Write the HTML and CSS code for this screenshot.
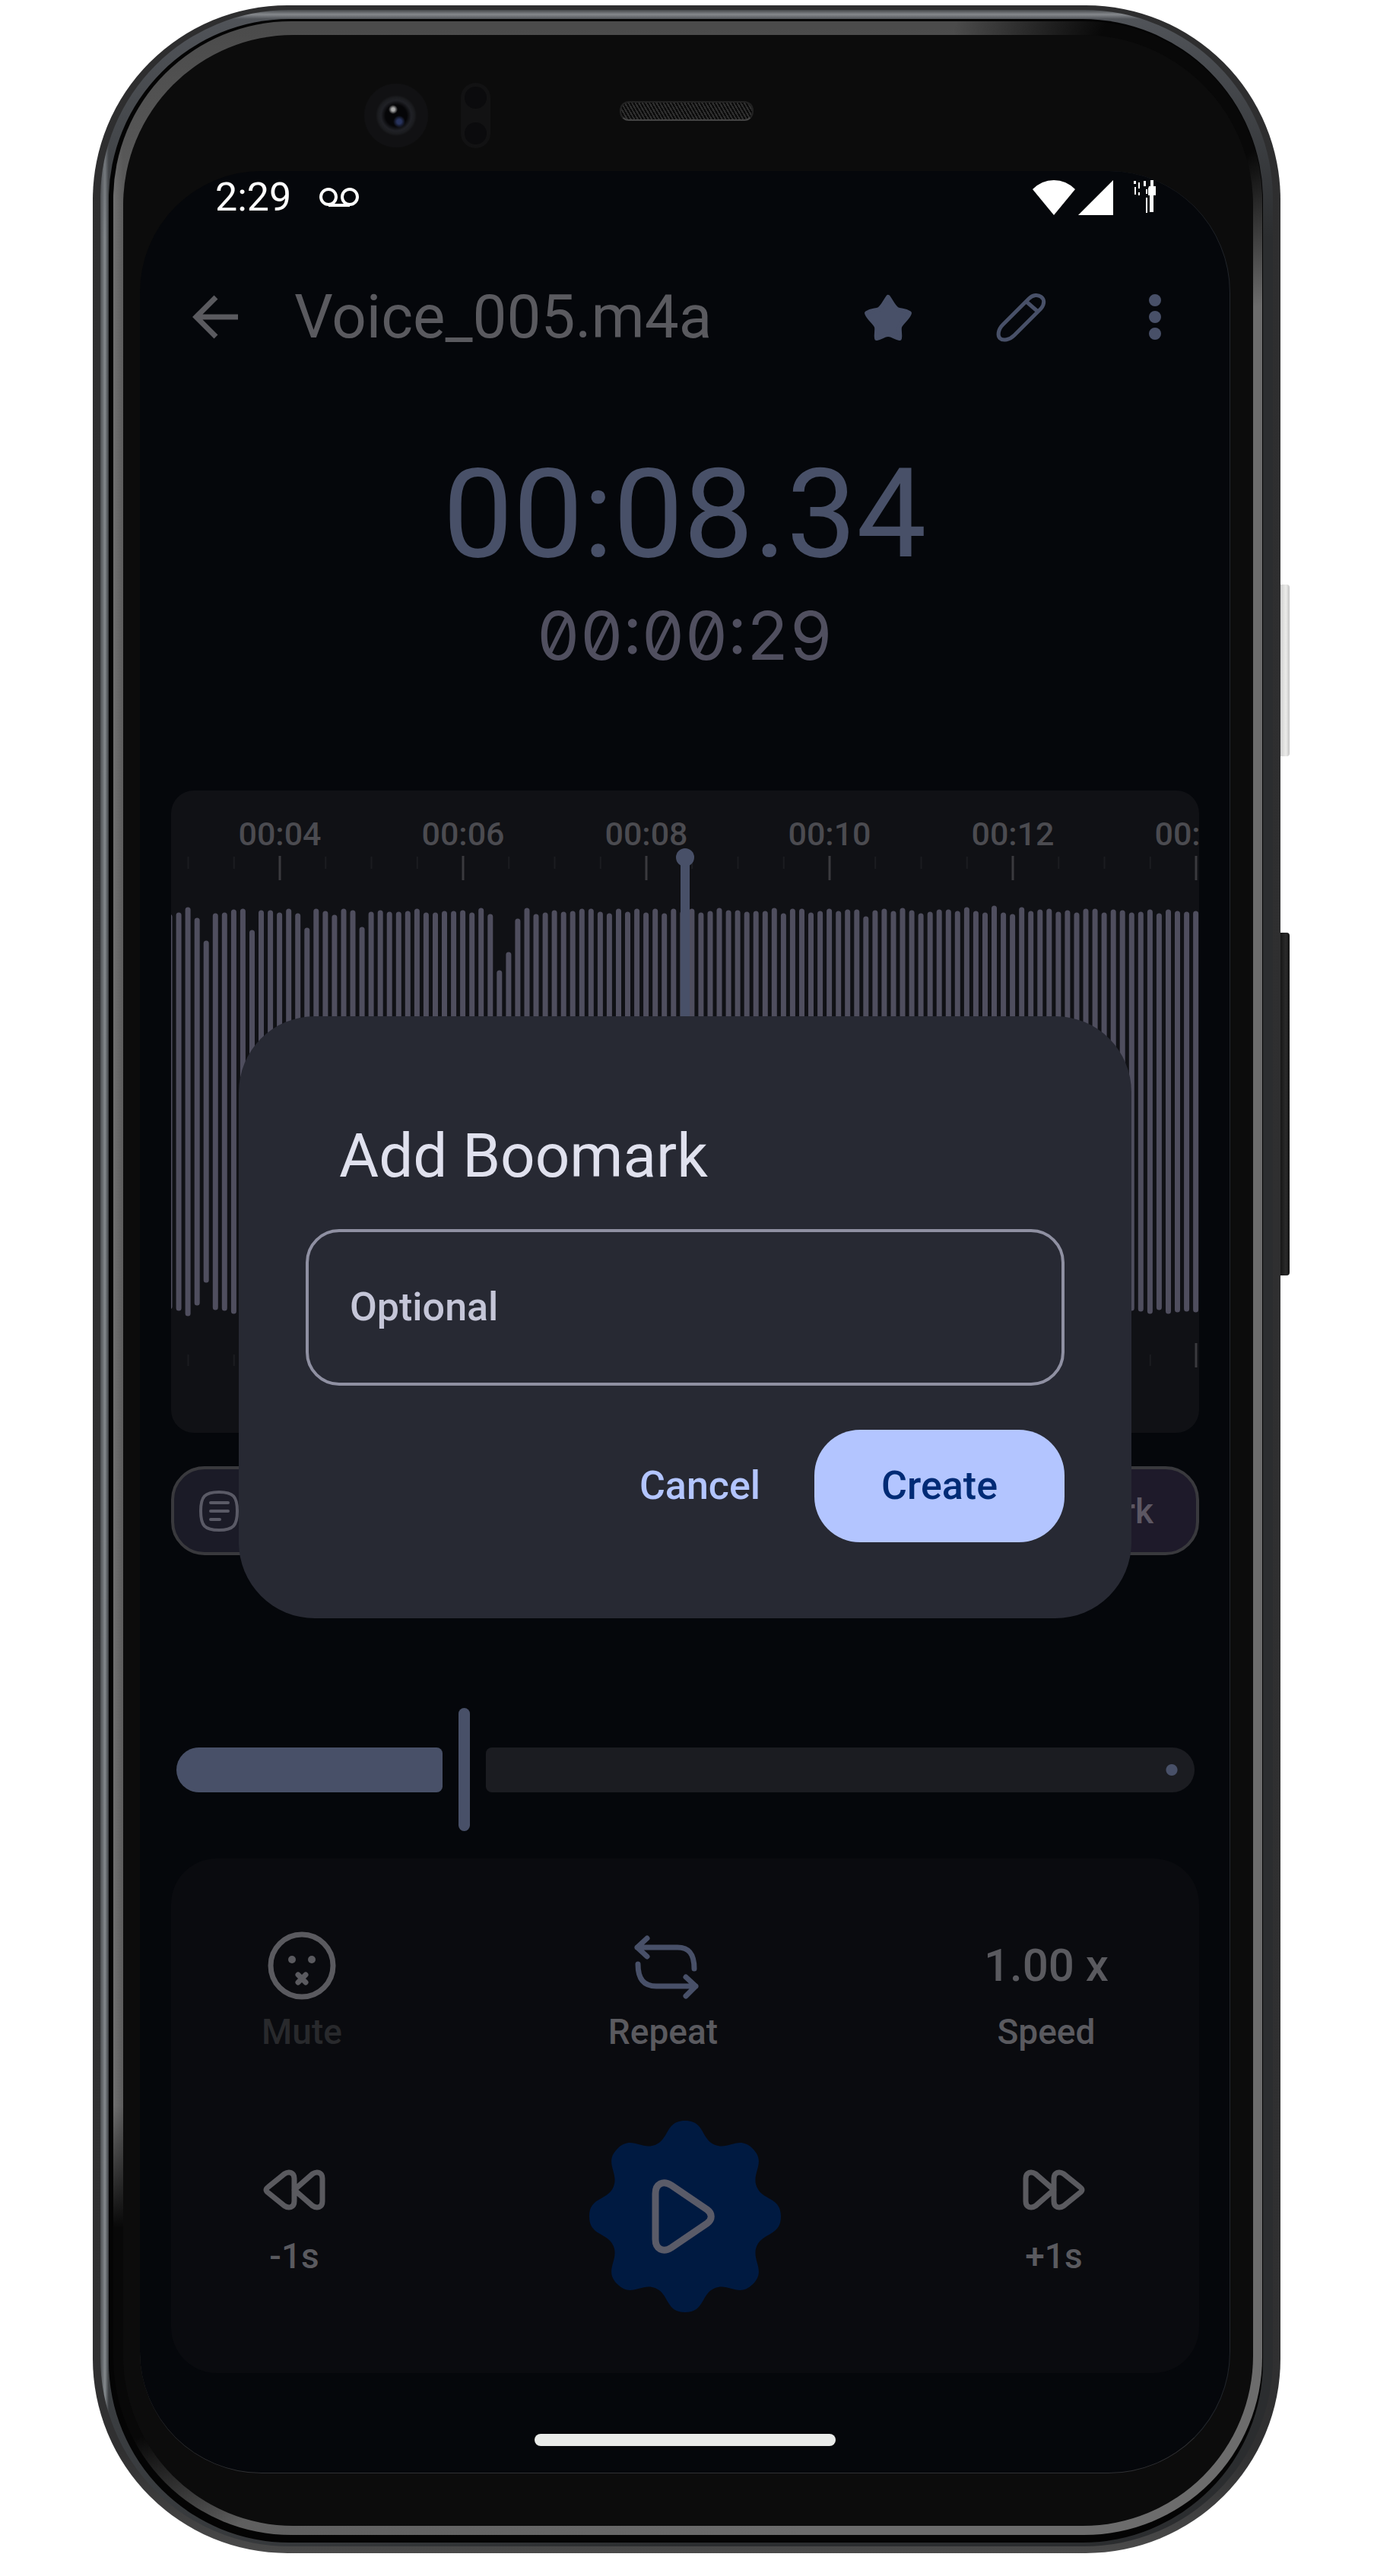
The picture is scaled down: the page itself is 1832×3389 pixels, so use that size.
FILE: index.html
```html
<!DOCTYPE html>
<html lang="en">
<head>
  <meta charset="utf-8">
  <meta name="viewport" content="width=device-width, initial-scale=1">
  <title>Voice_005.m4a</title>
  <link rel="stylesheet" href="styles.css">
</head>
<body>
  <div class="phone">
    <span class="side-key side-key-power"></span>
    <span class="side-key side-key-volume"></span>
    <div class="rim"><div class="groove"><div class="chamfer"><div class="bezel">
      <div class="sensors">
        <span class="camera"></span>
        <span class="proximity"><i></i><i></i></span>
        <span class="speaker"></span>
      </div>

      <div class="screen">
        <div class="status-bar">
          <span>2:29</span>
          <svg class="voicemail" width="54" height="30" viewBox="0 0 54 30" fill="none" stroke="currentColor" stroke-width="4">
            <circle cx="13" cy="14" r="10"/><circle cx="41" cy="14" r="10"/><path d="M13 25h28"/>
          </svg>
          <svg class="signals" width="162" height="48" viewBox="0 0 162 48" fill="currentColor">
            <path d="M28 47 0 13Q12 1 28 1t28 12z"/>
            <path d="M106 1v46H60z"/>
            <path d="M155 1h4v11h-4zM153 9h9v12h-3v22h-5V21h-2v-9zM149 24h2v20h-2zM133 2h3v4h-3zM139 4h2v8h-2zM134 10h2v10h-2zM146 2h3v7h-3zM149 13h2v6h-2zM139 17h2v4h-2z"/>
          </svg>
        </div>

        <header class="app-bar">
          <button type="button" class="icon-button back" aria-label="Back">
            <svg width="88" height="88" viewBox="0 0 88 88" fill="none" stroke="currentColor" stroke-width="7"><path d="M73 44H18M44 18 18 44l26 26"/></svg>
          </button>
          <h1 class="file-name">Voice_005.m4a</h1>
          <button type="button" class="icon-button" aria-label="Favourite">
            <svg width="88" height="88" viewBox="0 0 88 88" fill="currentColor" stroke="currentColor" stroke-width="6" stroke-linejoin="round"><path d="M44 18c5 7 7 13 12 16 5 2 10 1 16 5-3 8-11 12-13 18-1 5 1 9 0 15-6-1-9-5-15-5s-9 4-15 5c-1-6 1-10 0-15-2-6-10-10-13-18 6-4 11-3 16-5 5-3 7-9 12-16z"/></svg>
          </button>
          <button type="button" class="icon-button" aria-label="Rename">
            <svg width="88" height="88" viewBox="0 0 88 88" fill="none" stroke="currentColor" stroke-width="5" stroke-linejoin="round"><path d="M54 20 20 54c-7 7-7 15-4 18 4 4 13 2 19-4l35-35c11-13-5-24-16-13zM51 24l15 13"/></svg>
          </button>
          <button type="button" class="icon-button" aria-label="More options">
            <svg width="88" height="88" viewBox="0 0 88 88" fill="currentColor"><circle cx="45" cy="22" r="8"/><circle cx="45" cy="44" r="8"/><circle cx="45" cy="66" r="8"/></svg>
          </button>
        </header>

        <div class="clock">
          <p class="elapsed">00:08.34</p>
          <p class="total">00:00:29</p>
        </div>

        <div class="wave-card">
          <svg class="wave" id="wave" viewBox="0 0 1352 845" role="img" aria-label="Waveform"></svg>
        </div>

        <div class="chips">
          <button type="button" class="chip chip-list" aria-label="Bookmarks">
            <svg width="54" height="54" viewBox="0 0 54 54" fill="none" stroke="currentColor" stroke-width="4" stroke-linecap="round"><path d="M27 2c19 0 24 6 24 25s-5 25-24 25S3 46 3 27 8 2 27 2zM16 16h23M16 27h23M16 38h12"/></svg>
          </button>
          <button type="button" class="chip chip-add">Bookmark</button>
        </div>

        <div class="seek">
          <span class="seek-played"></span>
          <span class="seek-thumb"></span>
          <span class="seek-rest"></span>
          <input class="seek-input" type="range" min="0" max="2900" value="834" aria-label="Position">
        </div>

        <section class="controls">
          <div class="row-top">
            <button type="button" class="control muted">
              <svg class="face" width="106" height="106" viewBox="0 0 106 106" fill="none" stroke="currentColor" stroke-width="7" stroke-linecap="round"><circle cx="53" cy="53" r="41"/><circle cx="40" cy="45" r="5" fill="currentColor" stroke="none"/><circle cx="66" cy="45" r="5" fill="currentColor" stroke="none"/><path d="m48 65 10 10m0-10L48 75"/></svg>
              <span>Mute</span>
            </button>
            <button type="button" class="control">
              <svg class="accent" width="106" height="106" viewBox="-4 0 106 106" fill="none" stroke="currentColor" stroke-width="7" stroke-linecap="round" stroke-linejoin="round"><path d="M28 17 15 29l13 12M15 29h53c15 0 22 8 22 28M79 68l13 12-13 13M92 80H40c-16 0-24-9-24-29"/></svg>
              <span>Repeat</span>
            </button>
            <button type="button" class="control">
              <span class="rate">1.00 x</span>
              <span>Speed</span>
            </button>
          </div>
          <div class="row-bottom">
            <button type="button" class="control rewind">
              <svg width="106" height="106" viewBox="0 0 106 106" fill="none" stroke="currentColor" stroke-width="7" stroke-linejoin="round"><path d="M90 38v30c0 8-7 10-13 6L53 53l24-21c6-4 13-2 13 6zM53 38v30c0 8-7 10-13 6L19 57c-4-3-4-5 0-8l21-17c6-4 13-2 13 6z"/></svg>
              <span>-1s</span>
            </button>
            <button type="button" class="play" aria-label="Play">
              <svg width="252" height="252" viewBox="-126 -126 252 252">
                <path fill="#001a41" d="M126 0C126 26 101.900 20.500 94.200 39C86.500 57.500 107.500 70.700 89.100 89.100C70.700 107.500 57.500 86.500 39 94.200C20.500 101.900 26 126 0 126C-26 126-20.500 101.900-39 94.200C-57.500 86.500-70.700 107.500-89.100 89.100C-107.500 70.700-86.500 57.500-94.200 39C-101.900 20.500-126 26-126 0C-126-26-101.900-20.500-94.200-39C-86.500-57.500-107.500-70.700-89.100-89.100C-70.700-107.500-57.500-86.500-39-94.200C-20.500-101.900-26-126 0-126C26-126 20.500-101.900 39-94.200C57.500-86.500 70.700-107.500 89.100-89.100C107.500-70.700 86.500-57.500 94.200-39C101.900-20.500 126-26 126 0Z"/>
                <path fill="none" stroke="#5a5b68" stroke-width="9" d="M-39-30v60c0 13 10 18 21 11L29 9c7-5 7-13 0-18l-47-32c-11-7-21-2-21 11z"/>
              </svg>
            </button>
            <button type="button" class="control forward">
              <svg width="106" height="106" viewBox="0 0 106 106" fill="none" stroke="currentColor" stroke-width="7" stroke-linejoin="round"><path d="M16 38v30c0 8 7 10 13 6l24-21-24-21c-6-4-13-2-13 6zM53 38v30c0 8 7 10 13 6l21-17c4-3 4-5 0-8L66 32c-6-4-13-2-13 6z"/></svg>
              <span>+1s</span>
            </button>
          </div>
        </section>

        <span class="home-indicator"></span>

        <div class="overlay">
          <form class="dialog" role="dialog" aria-labelledby="dialog-title">
            <h2 class="dialog-title"><label id="dialog-title" for="bookmark-name">Add Boomark</label></h2>
            <input class="dialog-field" id="bookmark-name" type="text" placeholder="Optional">
            <div class="dialog-actions">
              <button type="button" class="text-button">Cancel</button>
              <button type="button" class="filled-button">Create</button>
            </div>
          </form>
        </div>
      </div>
    </div></div></div></div>
  </div>
  <script src="wave.js"></script>
</body>
</html>
```
FILE: styles.css
```css
* { box-sizing: border-box; }

body {
  margin: 0;
  padding: 7px 148px 32px 122px;
  background: #fff;
  font-family: Roboto, "Liberation Sans", sans-serif;
  color: #5a5a5f;
}

h1, h2, p { margin: 0; font-weight: 400; }

button {
  margin: 0;
  padding: 0;
  border: 0;
  background: none;
  color: inherit;
  font: inherit;
}

svg { display: block; }

/* Device shell, from the outer edge inwards */
.phone {
  position: relative;
  padding: 6px 10px 9px;
  border-radius: 256px;
  background: linear-gradient(to bottom, #2e2e2f, #303031 96%, #4a4a4a);
}

.rim {
  padding: 12px 13px 5px 11px;
  border-radius: 248px;
  background:
    linear-gradient(to bottom, #44474a, #85888c 6px, #505358 12px, transparent 300px),
    linear-gradient(to right, #4c4f52, #858a8e 6px, #3a3d40 11px, #2b2d2f 50%, #2b2d2f);
}

.groove {
  padding: 3px 1px 10px 6px;
  border-radius: 238px;
  background: #040404;
}

.chamfer {
  padding: 18px 12px 12px 13px;
  border-radius: 234px;
  background:
    radial-gradient(circle at 94% 2%, #080808 130px, transparent 320px),
    radial-gradient(circle at 0 92%, #080808 140px, transparent 300px),
    linear-gradient(to bottom, #4b4b4b 10px, transparent 240px),
    linear-gradient(to right, #707070, #5c5c5c 13px, #6c6c6c 60%);
}

.bezel {
  padding: 0 30px 69px 22px;
  border-radius: 224px;
  background: #0c0c0c;
}

.side-key {
  position: absolute;
  left: 100%;
  width: 12px;
  border-radius: 0 4px 4px 0;
}

.side-key-power {
  top: 762px;
  height: 226px;
  background: linear-gradient(to right, #d0d0d0, #ececea 60%, #c4c4c4);
}

.side-key-volume {
  top: 1220px;
  height: 451px;
  background: linear-gradient(to right, #161616, #2a2a2a 60%, #111);
}

.sensors {
  display: flex;
  align-items: center;
  height: 179px;
  padding: 33px 0 0 294px;
}

.camera {
  width: 86px;
  height: 86px;
  margin-right: 42px;
  border-radius: 50%;
  background:
    radial-gradient(circle at 39px 35px, #aaa 2px, transparent 6px),
    radial-gradient(circle at 47px 51px, #28335c 3px, transparent 8px),
    radial-gradient(circle at 43px 43px, #050507 14px, #202126 20px, #1b1c1f 24px, #111113 27px, #111113 41px, #0c0c0c 43px);
}

.proximity {
  display: flex;
  flex-direction: column;
  justify-content: space-between;
  width: 39px;
  height: 86px;
  margin-right: 170px;
  padding: 5px;
  border-radius: 20px;
  background: #121213;
}

.proximity i {
  width: 29px;
  height: 29px;
  border-radius: 50%;
  background: #0b0b0d;
}

.speaker {
  width: 176px;
  height: 26px;
  margin-bottom: 13px;
  border: 2px solid #222;
  border-bottom-color: #444;
  border-radius: 12px;
  background: repeating-linear-gradient(60deg, #0c0c0c 0 2px, #2e2e2e 2px 4px);
}

/* Screen */
.screen {
  position: relative;
  overflow: hidden;
  border-right: 1px solid #22262c;
  border-bottom: 1px solid #303134;
  border-radius: 160px;
  background: #05070b;
}

.status-bar {
  display: flex;
  align-items: center;
  height: 70px;
  padding: 0 97px 0 99px;
  color: #fff;
  font-size: 52px;
  line-height: 70px;
}

.voicemail { margin-left: 36px; }
.signals { margin-left: auto; }

.app-bar {
  display: flex;
  align-items: center;
  gap: 87px;
  height: 100px;
  margin-top: 72px;
  padding: 0 55px 0 56px;
  color: #485068;
}

.icon-button { flex: none; }
.back { margin-right: -28px; color: #5a5a5f; }

.file-name {
  flex: 1;
  color: #5a5a5f;
  font-size: 80px;
  line-height: 100px;
}

.clock {
  margin-top: 119px;
  text-align: center;
}

.elapsed {
  color: #485068;
  font-size: 164px;
  line-height: 180px;
}

.total {
  margin-top: 20px;
  color: #504f5f;
  font-family: Inter, "DejaVu Sans Mono", monospace;
  font-feature-settings: "zero", "tnum";
  font-size: 88px;
  font-weight: 400;
  line-height: 100px;
}

.wave-card {
  overflow: hidden;
  margin: 154px 40px 0 41px;
  border-radius: 30px;
  background: #101115;
}

.wave { width: 100%; height: auto; }
.wave-label { fill: #4b4b50; font-size: 43px; font-weight: 500; text-anchor: middle; }
.wave-major { stroke: #3a3a3e; stroke-width: 3; }
.wave-minor { stroke: #1b1c20; stroke-width: 2; }
.wave-bars { stroke: #4f4e5e; stroke-width: 7; stroke-linecap: round; }
.wave-head { stroke: #485068; stroke-width: 12; }
.wave-knob { fill: #485068; }

.chips {
  display: flex;
  gap: 32px;
  margin: 44px 40px 0 41px;
}

.chip {
  flex: 1;
  display: flex;
  align-items: center;
  height: 117px;
  border: 4px solid #39393d;
  border-radius: 44px;
  color: #5a5a66;
  font-size: 46px;
  font-weight: 500;
}

.chip-list { padding-left: 32px; background: #1b1b27; }
.chip-add { justify-content: flex-end; padding-right: 56px; background: #1e1a2a; color: #5c5763; }

/* Seek bar */
.seek {
  position: relative;
  display: flex;
  align-items: center;
  gap: 21px;
  height: 162px;
  margin: 201px 46px 0 48px;
}

.seek-played {
  flex: 350;
  height: 59px;
  border-radius: 30px 8px 8px 30px;
  background: #485068;
}

.seek-thumb {
  width: 15px;
  height: 162px;
  border-radius: 8px;
  background: #485068;
}

.seek-rest {
  flex: 932;
  height: 59px;
  border-radius: 8px 30px 30px 8px;
  background: radial-gradient(circle at calc(100% - 30px) 50%, #485068 7px, transparent 8px), #1b1c21;
}

.seek-input {
  position: absolute;
  inset: 0;
  width: 100%;
  height: 100%;
  margin: 0;
  opacity: 0;
}

/* Playback controls */
.controls {
  margin: 36px 40px 0 41px;
  padding: 88px 0 80px;
  border-radius: 60px;
  background: #0a0b0f;
}

.row-top {
  display: flex;
  justify-content: space-between;
  padding: 0 119px;
}

.row-bottom {
  display: grid;
  grid-template-columns: 1fr 252px 1fr;
  align-items: center;
  margin-top: 91px;
}

.control {
  display: flex;
  flex-direction: column;
  align-items: center;
  gap: 8px;
  font-size: 46px;
  font-weight: 500;
  line-height: 52px;
}

.rate { font-size: 60px; line-height: 106px; }
.muted { color: #28292c; }
.face { color: #5a5a5f; }
.accent { color: #485068; }
.rewind { justify-self: start; margin-left: 109px; padding-bottom: 10px; }
.forward { justify-self: end; margin-right: 138px; padding-bottom: 10px; }

.home-indicator {
  display: block;
  width: 396px;
  height: 16px;
  margin: 80px auto 35px;
  border-radius: 8px;
  background: #eaecea;
}

/* Dialog */
.overlay {
  position: absolute;
  inset: 0;
  display: flex;
  align-items: center;
  padding: 0 129px 13px 130px;
}

.dialog {
  flex: 1;
  padding: 136px 88px 100px;
  border-radius: 100px;
  background: #272933;
}

.dialog-title {
  margin-left: 44px;
  color: #e0e1ee;
  font-size: 80px;
  line-height: 96px;
}

.dialog-field {
  display: block;
  width: 100%;
  height: 206px;
  margin-top: 48px;
  padding: 0 54px;
  border: 4px solid #8f90a2;
  border-radius: 44px;
  background: none;
  color: #e0e1ee;
  font-family: inherit;
  font-size: 52px;
  font-weight: 500;
}

.dialog-field::placeholder { color: #c5c6d8; opacity: 1; }

.dialog-actions {
  display: flex;
  justify-content: flex-end;
  gap: 35px;
  margin-top: 58px;
  font-size: 52px;
  font-weight: 500;
}

.text-button { height: 148px; padding: 0 36px; color: #b3c5ff; }
.filled-button { height: 148px; padding: 0 88px; border-radius: 60px; background: #b3c5ff; color: #002b75; }
```
FILE: wave.js
```js
// Distance from the top of the card to the tip of each bar.
const tips = [
  162, 160, 153, 167, 197, 161, 160, 156, 155, 183, 157, 157, 160, 155, 161, 180,
  155, 158, 163, 155, 157, 179, 159, 157, 159, 159, 158, 155, 160, 160, 158, 158,
  157, 160, 154, 162, 236, 212, 168, 154, 162, 160, 157, 159, 158, 155, 155, 159,
  161, 155, 159, 155, 160, 155, 161, 155, 158, 155, 160, 158, 154, 157, 157, 159,
  158, 158, 154, 161, 155, 155, 160, 158, 155, 158, 156, 156, 165, 157, 155, 158,
  154, 157, 161, 159, 156, 156, 158, 153, 158, 160, 151, 160, 162, 153, 158, 156,
  155, 159, 157, 160, 155, 155, 160, 156, 157, 160, 159, 156, 161, 156, 158, 159, 158
];
const labels = ["00:04", "00:06", "00:08", "00:10", "00:12", "00:14"];
const height = 845;
const second = 120.5;
const firstLabel = 143;

let bars = "";
tips.forEach((tip, i) => {
  const x = Math.round((i * 12.05 - 2) * 10) / 10;
  bars += `M${x} ${tip + 4}V${height - tip - 4}`;
});

let minor = "";
let major = "";
let texts = "";
for (let i = -2; i <= 20; i++) {
  const x = firstLabel + i * second / 2;
  if (i % 4 === 0) {
    major += `M${x} 86v32M${x} 727v32`;
  } else {
    minor += `M${x} 87v16M${x} 742v15`;
  }
}
labels.forEach((label, i) => {
  texts += `<text class="wave-label" x="${firstLabel + i * second * 2}" y="72">${label}</text>`;
});

document.getElementById("wave").innerHTML =
  `<path class="wave-minor" d="${minor}"/><path class="wave-major" d="${major}"/>` +
  `<path class="wave-bars" d="${bars}"/>` + texts +
  `<path class="wave-head" d="M676 88V757"/><circle class="wave-knob" cx="676" cy="88" r="12"/>`;
```
